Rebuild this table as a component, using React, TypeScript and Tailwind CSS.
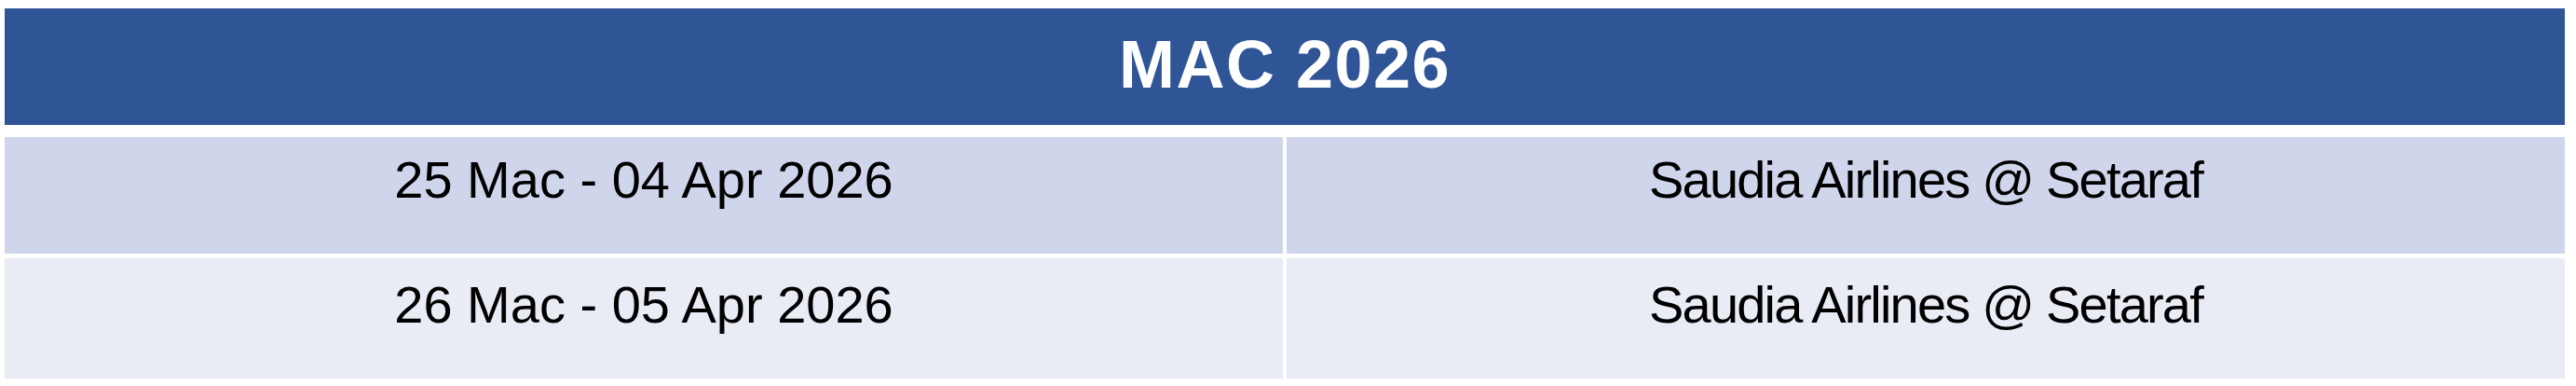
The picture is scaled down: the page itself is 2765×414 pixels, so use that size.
import React from "react";

interface ScheduleRow {
  dates: string;
  airline: string;
}

const rows: ScheduleRow[] = [
  { dates: "25 Mac - 04 Apr 2026", airline: "Saudia Airlines @ Setaraf" },
  { dates: "26 Mac - 05 Apr 2026", airline: "Saudia Airlines @ Setaraf" },
];

export default function App() {
  return (
    <div className="min-h-[414px] w-full bg-white pl-[5px] pr-[12px] pt-[9px] font-['Liberation_Sans',Arial,sans-serif] text-black">
      {/* Month header */}
      <div className="flex h-[125px] justify-center bg-[#2F5597] pt-[24px]">
        <h1 className="text-[72px] font-bold leading-[72px] tracking-[1.5px] text-white">MAC 2026</h1>
      </div>

      {/* Departure rows */}
      <div className="mt-[13px] grid grid-cols-2 gap-x-[4px] gap-y-[5px]">
        {rows.map((row, i) => {
          const rowClass =
            i % 2 === 0
              ? "h-[125px] bg-[#CFD5EA] pt-[14px]"
              : "h-[129px] bg-[#E9EBF5] pt-[18px]";
          return (
            <React.Fragment key={i}>
              <div className={`${rowClass} text-center text-[56px] leading-[64px]`}>{row.dates}</div>
              <div className={`${rowClass} text-center text-[56px] leading-[64px] tracking-[-1.8px]`}>
                {row.airline}
              </div>
            </React.Fragment>
          );
        })}
      </div>
    </div>
  );
}
